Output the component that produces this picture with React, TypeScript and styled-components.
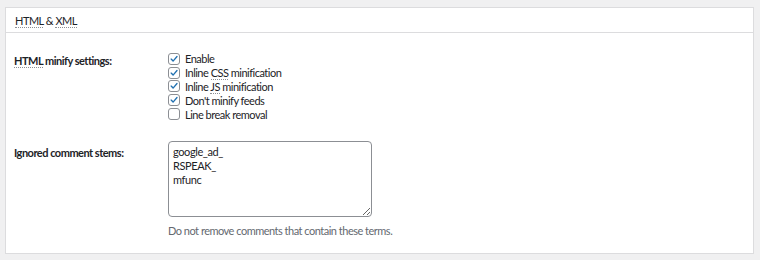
import React from 'react';
import styled, {createGlobalStyle} from 'styled-components';

const GlobalStyle = createGlobalStyle`
	body {
		margin: 0;
		background-color: #f0f0f1;
		font-family: Lato, "Liberation Sans", Arial, sans-serif;
		color: #1d2327;
		letter-spacing: -0.5px;
	}
`;

const CheckIcon = () => (
	<svg width="12" height="12" viewBox="0 0 12 12">
		<path d="M2.6 6.1 L4.9 8.5 L9.6 3" fill="none" stroke="#2271b1" strokeWidth="1.6" strokeLinecap="round" strokeLinejoin="round" />
	</svg>
);

const App = () => {
	const options = [
		{ key: 'enable', label: <>Enable</>, checked: true },
		{ key: 'css', label: <>Inline <Abbr title="Cascading Style Sheets">CSS</Abbr> minification</>, checked: true },
		{ key: 'js', label: <>Inline <Abbr title="JavaScript">JS</Abbr> minification</>, checked: true },
		{ key: 'feeds', label: <>Don't minify feeds</>, checked: true },
		{ key: 'lines', label: <>Line break removal</>, checked: false },
	];

	return (
		<Page>
			<GlobalStyle />
			<Panel>
				<Header>
					<Title><Abbr title="HyperText Markup Language">HTML</Abbr> &amp; <Abbr title="Extensible Markup Language">XML</Abbr></Title>
				</Header>
				<Body>
					<Row>
						<Label offset={2}><Abbr title="HyperText Markup Language">HTML</Abbr> minify settings:</Label>
						<OptionList>
							{options.map((o) => (
								<Option key={o.key}>
									<Box>{o.checked && <CheckIcon />}</Box>
									<span>{o.label}</span>
								</Option>
							))}
						</OptionList>
					</Row>
					<Row>
						<Label offset={5}>Ignored comment stems:</Label>
						<Field>
							<TextArea defaultValue={'google_ad_\nRSPEAK_\nmfunc'} />
							<Hint>Do not remove comments that contain these terms.</Hint>
						</Field>
					</Row>
				</Body>
			</Panel>
		</Page>
	);
};

export default App;

const Page = styled.div`
	padding: 7px 6px 0 5px;
`;

const Panel = styled.div`
	background-color: #fff;
	border: 1px solid #dcdcde;
	height: 247px;
	box-sizing: border-box;
`;

const Header = styled.div`
	height: 25px;
	border-bottom: 1px solid #dcdcde;
	display: flex;
	align-items: center;
	padding-left: 9px;
	box-sizing: border-box;
`;

const Title = styled.h2`
	margin: 0;
	font-size: 11px;
	font-weight: normal;
	color: #1d2327;
`;

const Abbr = styled.abbr`
	text-decoration: none;
	border-bottom: 1px dotted #8c8f94;
	cursor: help;
`;

const Body = styled.div`
	display: flex;
	flex-direction: column;
	gap: 20px;
	padding: 19px 0 0 8px;
`;

const Row = styled.div`
	display: grid;
	grid-template-columns: 154px 1fr;
	align-items: start;
`;

const Label = styled.div<{ offset: number }>`
	font-size: 11px;
	font-weight: bold;
	padding-top: ${(p) => p.offset}px;
`;

const OptionList = styled.div`
	display: flex;
	flex-direction: column;
`;

const Option = styled.label`
	display: flex;
	align-items: center;
	gap: 5px;
	height: 13.8px;
	font-size: 11px;
	color: #1d2327;
`;

const Box = styled.span`
	width: 12px;
	height: 12px;
	border: 1px solid #8c8f94;
	border-radius: 3px;
	display: inline-flex;
	align-items: center;
	justify-content: center;
	background-color: #fff;
	flex-shrink: 0;
	box-sizing: border-box;
	svg { display: block; }
`;

const Field = styled.div`
	display: flex;
	flex-direction: column;
	gap: 7px;
`;

const TextArea = styled.textarea`
	width: 204px;
	height: 76px;
	box-sizing: border-box;
	border: 1px solid #8c8f94;
	border-radius: 4px;
	padding: 3px 4px;
	font-family: Lato, "Liberation Sans", Arial, sans-serif;
	font-size: 11px;
	letter-spacing: -0.4px;
	line-height: 14px;
	color: #1d2327;
	margin: 0;
	outline: none;
`;

const Hint = styled.p`
	margin: 0;
	font-size: 11px;
	color: #646970;
`;
